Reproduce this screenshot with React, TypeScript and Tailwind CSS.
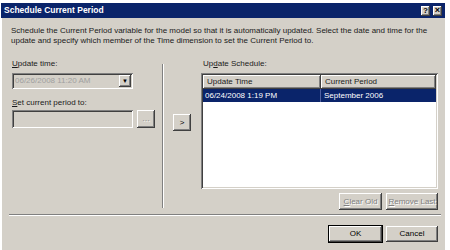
import React from 'react'

// Windows classic bevels
const raised =
  'bg-[#d4d0c8] shadow-[inset_-1px_-1px_#404040,inset_1px_1px_#ffffff,inset_-2px_-2px_#808080,inset_2px_2px_#d4d0c8]'
const sunken =
  'shadow-[inset_1px_1px_#808080,inset_-1px_-1px_#ffffff,inset_2px_2px_#404040,inset_-2px_-2px_#d4d0c8]'
const disabledText = 'text-[#808080] [text-shadow:1px_1px_#ffffff]'

function Btn({
  children,
  className = '',
  disabled = false,
  isDefault = false,
}: {
  children: React.ReactNode
  className?: string
  disabled?: boolean
  isDefault?: boolean
}) {
  return (
    <div
      className={`${raised} flex items-center justify-center leading-none ${
        disabled ? disabledText : 'text-black'
      } ${isDefault ? 'outline outline-1 outline-black' : ''} ${className}`}
    >
      {children}
    </div>
  )
}

export default function App() {
  return (
    <div
      className="w-[450px] h-[250px] bg-white pt-[3px] pl-[1px] overflow-hidden text-[8px] text-[#1a1a1a]"
      style={{ fontFamily: '"Liberation Sans", Arial, sans-serif' }}
    >
      <div className="w-[444px] h-[247px] bg-[#d4d0c8] flex flex-col shadow-[inset_1px_0_#ffffff]">
        {/* Title bar */}
        <div className="h-[15px] bg-[#0a246a] flex items-center justify-between pl-[3px] pr-[3px]">
          <span className="text-white font-bold text-[8.5px] leading-none">Schedule Current Period</span>
          <div className="flex gap-[3px]">
            <Btn className="w-[9px] h-[10px] font-bold text-[8px]">?</Btn>
            <Btn className="w-[9px] h-[10px] font-bold text-[9px]">×</Btn>
          </div>
        </div>

        {/* Description */}
        <div className="pt-[8px] px-[10px] leading-[10px]">
          <div>
            Schedule the Current Period variable for the model so that it is automatically updated. Select the date and time for the
          </div>
          <div>update and specify which member of the Time dimension to set the Current Period to.</div>
        </div>

        {/* Main area */}
        <div className="mt-[13px] h-[151px] flex">
          {/* Left column */}
          <div className="ml-[11px] w-[144px] flex flex-col">
            <div className="leading-[10px]">
              <span className="underline">U</span>pdate time:
            </div>
            <div className={`mt-[4px] w-[121px] h-[16px] bg-[#d4d0c8] ${sunken} flex items-center pl-[3px] pr-[2px]`}>
              <span className="flex-1 text-[#a0a0a0]">06/26/2008 11:20 AM</span>
              <Btn className="w-[12px] h-[12px] text-[6px] text-[#808080]">▼</Btn>
            </div>
            <div className="mt-[9px] leading-[10px]">
              <span className="underline">S</span>et current period to:
            </div>
            <div className="mt-[2px] flex gap-[4px]">
              <div className={`w-[121px] h-[18px] bg-[#d4d0c8] ${sunken}`} />
              <Btn disabled className="w-[18px] h-[18px]">…</Btn>
            </div>
          </div>

          {/* Etched vertical separator */}
          <div className="ml-[6px] mt-[5px] h-[144px] w-[2px] flex">
            <div className="w-[1px] bg-[#808080]" />
            <div className="w-[1px] bg-white" />
          </div>

          {/* Move button */}
          <div className="ml-[9px] pt-[55px]">
            <Btn className="w-[18px] h-[17px]">&gt;</Btn>
          </div>

          {/* Right column */}
          <div className="ml-[10px] w-[237px] flex flex-col">
            <div className="pl-[2px] leading-[10px]">
              Up<span className="underline">d</span>ate Schedule:
            </div>
            <div className={`mt-[4px] h-[116px] bg-white ${sunken} p-[2px]`}>
              <div className="flex h-[14px]">
                <div className={`${raised} w-[118px] flex items-center pl-[4px]`}>Update Time</div>
                <div className={`${raised} flex-1 flex items-center pl-[4px]`}>Current Period</div>
              </div>
              <div className="flex h-[13px] bg-[#0a246a] text-white">
                <div className="w-[118px] flex items-center pl-[2px] border-r border-[#5060a0]">06/24/2008 1:19 PM</div>
                <div className="flex-1 flex items-center pl-[3px]">September 2006</div>
              </div>
            </div>
            <div className="mt-[4px] flex justify-end gap-[4px]">
              <Btn disabled className="w-[43px] h-[17px]">
                <span className="underline">C</span>lear Old
              </Btn>
              <Btn disabled className="w-[52px] h-[17px]">
                <span className="underline">R</span>emove Last
              </Btn>
            </div>
          </div>
        </div>

        {/* Horizontal etched separator */}
        <div className="mt-[4px] ml-[8px] w-[432px] flex flex-col">
          <div className="h-[1px] bg-[#808080]" />
          <div className="h-[1px] bg-white" />
        </div>

        {/* Footer */}
        <div className="mt-[10px] pr-[7px] flex justify-end gap-[4px]">
          <Btn isDefault className="w-[53px] h-[16px]">OK</Btn>
          <Btn className="w-[52px] h-[16px]">Cancel</Btn>
        </div>
      </div>
    </div>
  )
}
